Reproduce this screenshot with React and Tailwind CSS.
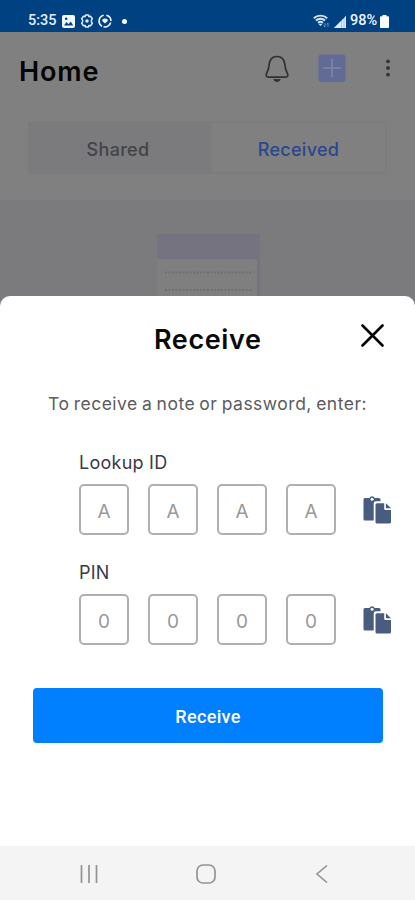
import React from 'react';

const lookupId = ['A', 'A', 'A', 'A'];
const pin = ['0', '0', '0', '0'];

const StatusBar = () => (
  <div className="flex h-8 shrink-0 items-start justify-between bg-[#004182] pt-[13px] pr-[26px] pl-[28px] font-[Roboto,sans-serif] text-white">
    <div className="flex h-4 items-center">
      <span className="w-[29px] text-[14.5px] leading-4 font-medium text-[#e3efff]">5:35</span>
      <svg className="ml-[5px]" width="13" height="13" viewBox="0 0 13 13">
        <rect width="13" height="13" rx="2" fill="#f3f8ff" />
        <path d="M2 10.5 4.5 7l2 2.2L8.7 6.5l2.6 4z" fill="#004182" />
        <circle cx="4.2" cy="3.7" r="1.3" fill="#004182" />
      </svg>
      <svg className="ml-[5px]" width="14" height="14" viewBox="0 0 14 14" fill="none" stroke="#dfebff" strokeWidth="1.5" strokeLinejoin="round">
        <path d="M5.6 1h2.8l.5 1.6 1.6-.3 1.9 2.4-1 1.5v1.6l1 1.5-1.9 2.4-1.6-.3-.5 1.6H5.6l-.5-1.6-1.6.3-1.9-2.4 1-1.5V6.2l-1-1.5 1.9-2.4 1.6.3z" />
        <circle cx="7" cy="7" r="1" fill="#dfebff" />
      </svg>
      <svg className="ml-[4px]" width="14" height="14" viewBox="0 0 14 14" fill="none" stroke="#eef5ff" strokeWidth="1.6">
        <path d="M5.7 1.2A6 6 0 0 0 4 12.2M5.5 12.8A6 6 0 0 0 12.7 8.5M13 7A6 6 0 0 0 8.3 1.2" />
        <path d="M4.6 5.200q2.400-1.200 4.800 0 .8.900 0 2L7 9.600 4.600 7.200q-.8-1.100 0-2z" fill="#eef5ff" stroke="none" />
      </svg>
      <span className="ml-[10px] h-[5px] w-[5px] rounded-full bg-white" />
    </div>
    <div className="flex h-4 items-center">
      <svg width="17" height="15" viewBox="0 0 17 15" fill="none" stroke="#d6e6fb" strokeWidth="1.9">
        <path d="M.8 4.2C4.5.7 10.5.7 14.2 4.2M2.9 6.5c2.6-2.4 6.6-2.4 9.2 0M5 8.8c1.5-1.3 3.5-1.3 5 0" />
        <path d="m7.5 12 2.2-2.3H5.3z" fill="#d6e6fb" stroke="none" />
        <path d="M12 9v4m-1.5-1.5L12 13M15 13V9.2m-1.3 1.4L15 9.2" strokeWidth=".7" opacity=".7" />
      </svg>
      <svg className="ml-[4px]" width="12" height="13" viewBox="0 0 12 13">
        <path d="M0 13 12 1v12z" fill="#a9c3e3" />
        <path d="M0 13 7 6v7zM8 5l1.5-1.5V13H8zM10.5 2.5 12 1v12h-1.500z" fill="#dceaff" />
      </svg>
      <span className="ml-[4px] w-[30px] text-[14.5px] leading-4 font-medium whitespace-nowrap text-[#edf5ff]">98%</span>
      <svg width="9" height="13" viewBox="0 0 9 13" fill="#fff">
        <path d="M2.5 0h4v1.2H8q1 0 1 1V12q0 1-1 1H1q-1 0-1-1V2.2q0-1 1-1h1.5z" />
      </svg>
    </div>
  </div>
);

const Header = () => (
  <div className="flex h-[89px] shrink-0 items-start pt-[20px] pl-[19px]">
    <h1 className="w-[244px] text-[27px] leading-[40px] font-semibold tracking-[0.9px] text-[#050505]">Home</h1>
    <svg className="mt-[3px] ml-[2px]" width="24" height="29" viewBox="0 0 24 29" fill="none" stroke="#303033" strokeWidth="1.7" strokeLinejoin="round">
      <path d="M12 1.5c-4.800 0-7.500 3.400-7.900 8.300-.3 4.200-.8 5-2 7.400-1.700 3.300-.8 5 1.500 5h16.800c2.300 0 3.200-1.700 1.500-5-1.200-2.400-1.700-3.200-2-7.400-.4-4.900-3.100-8.300-7.900-8.300z" />
      <path d="M8.7 24.500c.6 1.300 1.800 2 3.300 2s2.700-.7 3.300-2z" fill="#303033" strokeWidth=".8" />
    </svg>
    <svg className="mt-[2px] ml-[29px]" width="28" height="29" viewBox="0 0 28 29">
      <rect x=".5" y=".5" width="27" height="27.5" rx="3" fill="#626b95" />
      <path d="M14 5v18M5 14h18" stroke="#8187a0" strokeWidth="1.7" />
    </svg>
    <svg className="mt-[7px] ml-[39px]" width="6" height="18" viewBox="0 0 6 18" fill="#343436">
      <circle cx="3" cy="2.3" r="1.9" />
      <circle cx="3" cy="9" r="1.9" />
      <circle cx="3" cy="15.7" r="1.9" />
    </svg>
  </div>
);

const Tabs = () => (
  <div className="ml-[28px] flex h-[53px] w-[359px] shrink-0 rounded bg-[#7b7b7d] text-[18px] font-medium tracking-[0.3px]">
    <div className="flex w-[182px] items-center justify-center pt-[3px] pr-[2px] text-[#434348]">Shared</div>
    <div className="flex flex-1 items-center justify-center rounded border-2 border-[#7d7d7e] bg-[#808080] pt-[3px] text-[#29478f]">
      Received
    </div>
  </div>
);

const NotePreview = () => (
  <div className="mt-[26px] flex h-[96px] items-start justify-center bg-[#7b7b7d] pt-[34px] pl-px">
    <svg width="103" height="62" viewBox="0 0 103 62">
      <path d="M0 3q0-3 3-3h97q3 0 3 3v59H0z" fill="#757380" />
      <path d="M0 25h97q3 0 3 3v34H0z" fill="#7f7f80" />
      <path d="M8 38.5h88M8 56h88" stroke="#6f6f72" strokeWidth="2" strokeDasharray="2 1.5" />
    </svg>
  </div>
);

const PasteIcon = () => (
  <svg className="mb-px ml-[27px]" width="29" height="29" viewBox="0 0 29 29">
    <path d="M2 3h4.5a2.8 2.8 0 0 1 5.200 0H16q1.500 0 1.500 1.500v1.800H13q-2.300 0-2.300 2.300v16.900H2q-1.500 0-1.500-1.500V4.500Q.5 3 2 3z" fill="#475c7e" />
    <circle cx="9.1" cy="4.3" r="1.5" fill="#fff" />
    <path d="M14 8.2h7.200v5.500q0 1.300 1.300 1.300H28v12q0 1.500-1.500 1.500H14q-1.500 0-1.500-1.500V9.700q0-1.500 1.500-1.500z" fill="#475c7e" />
    <path d="M22.9 8.2 28 13.3h-5.100z" fill="#475c7e" />
  </svg>
);

const CodeField = ({ label, values }) => (
  <div className="pl-[79px]">
    <div className="h-6 text-[18px] leading-6 tracking-[0.25px] text-[#39394a]">{label}</div>
    <div className="mt-[9px] flex items-center">
      <div className="flex gap-[19px]">
        {values.map((value, i) => (
          <div
            key={i}
            className="flex h-[51px] w-[50px] items-center justify-center rounded-[5px] border-2 border-[#b0b0b0] pt-[5px] text-[19px] text-[#999]"
          >
            {value}
          </div>
        ))}
      </div>
      <PasteIcon />
    </div>
  </div>
);

const ReceiveSheet = () => (
  <div className="flex h-[550px] shrink-0 flex-col rounded-t-[10px] bg-white">
    <div className="flex h-[84px] items-start pt-[23px] pl-[154px]">
      <h2 className="w-[207px] pt-px text-[27px] leading-[40px] font-semibold tracking-[0.6px] text-[#090909]">Receive</h2>
      <svg className="mt-[5px]" width="23" height="23" viewBox="0 0 23 23" fill="none" stroke="#050505" strokeWidth="2.6" strokeLinecap="round">
        <path d="m1.5 1.5 20 20M21.5 1.5l-20 20" />
      </svg>
    </div>
    <p className="h-[71px] pt-[12px] pl-[48px] text-[17.5px] leading-6 tracking-[0.5px] [word-spacing:-1.2px] whitespace-nowrap text-[#5b5b60]">
      To receive a note or password, enter:
    </p>
    <CodeField label="Lookup ID" values={lookupId} />
    <div className="h-[26px]" />
    <CodeField label="PIN" values={pin} />
    <button className="mt-[43px] ml-[33px] h-[55px] w-[350px] rounded bg-[#007fff] pt-px font-[Roboto,sans-serif] text-[18px] font-medium tracking-[0.35px] text-white">
      Receive
    </button>
  </div>
);

const NavBar = () => (
  <div className="flex flex-1 items-center bg-[#f4f4f4] pt-px pl-[80px]">
    <svg width="18" height="18" viewBox="0 0 18 18" stroke="#939393" strokeWidth="1.7">
      <path d="M1.5 0v18M9 0v18M16.5 0v18" />
    </svg>
    <svg className="ml-[98px]" width="20" height="20" viewBox="0 0 20 20" fill="none" stroke="#939393" strokeWidth="1.7">
      <rect x="1" y="1" width="18" height="18" rx="6" />
    </svg>
    <svg className="ml-[100px]" width="12" height="18" viewBox="0 0 12 18" fill="none" stroke="#939393" strokeWidth="1.6">
      <path d="m11 .5-10 8.500 10 8.500" />
    </svg>
  </div>
);

export default function App() {
  return (
    <div className="flex h-[900px] w-[415px] flex-col overflow-hidden bg-[#7b7b7d] font-[Inter,sans-serif]">
      <StatusBar />
      <div className="flex h-[264px] shrink-0 flex-col bg-[#808080]">
        <Header />
        <Tabs />
        <NotePreview />
      </div>
      <ReceiveSheet />
      <NavBar />
    </div>
  );
}
